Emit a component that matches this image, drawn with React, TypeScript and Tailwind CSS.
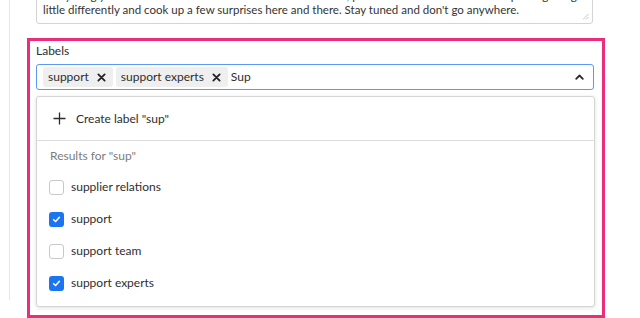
import React from "react";

const XIcon = () => (
  <svg width="9" height="9" viewBox="0 0 10 10" className="shrink-0">
    <path d="M1.5 1.5 L8.5 8.5 M8.5 1.5 L1.5 8.5" stroke="#222" strokeWidth="2" strokeLinecap="round" />
  </svg>
);

const Check = ({ checked }: { checked: boolean }) =>
  checked ? (
    <span className="w-[15px] h-[15px] rounded-[3px] bg-[#1b74f0] flex items-center justify-center shrink-0">
      <svg width="9" height="9" viewBox="0 0 10 10">
        <path d="M1.8 5.2 L4 7.3 L8.2 2.6" stroke="white" strokeWidth="1.7" fill="none" strokeLinecap="round" strokeLinejoin="round" />
      </svg>
    </span>
  ) : (
    <span className="w-[15px] h-[15px] rounded-[3px] border border-[#c9c9c9] bg-white shrink-0" />
  );

const items = [
  { label: "supplier relations", checked: false },
  { label: "support", checked: true },
  { label: "support team", checked: false },
  { label: "support experts", checked: true },
];

export default function App() {
  return (
    <div
      className="w-[640px] h-[318px] overflow-hidden bg-white text-[#2e2e2e]"
      style={{ fontFamily: "Lato, 'Noto Sans', sans-serif" }}
    >
      <div className="ml-[9px] h-full border-l border-[#e6e6e6] pl-[17px] pr-[35px]">
        {/* textarea */}
        <div className="relative ml-[9px] mr-[12px] -mt-[18px] border border-[#d4d4d4] rounded-[3px] pt-[6px] pb-[6px] pl-[6px] text-[11.5px] leading-[14px] text-[#333] whitespace-nowrap overflow-hidden">
          <div>everything you've come to learn and love about our summits, plus a lot more. We couldn't help doing thing a</div>
          <div>little differently and cook up a few surprises here and there. Stay tuned and don't go anywhere.</div>
          <svg width="7" height="7" viewBox="0 0 7 7" className="absolute right-[3px] bottom-[3px]">
            <path d="M6.5 1 L1 6.5 M6.5 4 L4 6.5" stroke="#b5b5b5" strokeWidth="0.8" />
          </svg>
        </div>

        {/* pink highlight */}
        <div className="mt-[14px] border-[3px] border-[#ec2d7b] pl-[6px] pr-[8px] pt-[3px] pb-[8px]">
          <div className="text-[12px] leading-[14px] text-[#2e2e2e]">Labels</div>
          <div className="mt-[6px] h-[26px] border border-[#5a9af5] rounded-[3px] flex items-center pl-[6px] pr-[9px]">
            <div className="flex items-center gap-[3px] flex-1">
              <span className="h-[20px] rounded-[3px] bg-[#efefef] flex items-center pl-[5px] pr-[7px] gap-[8px] text-[12px] text-[#2e2e2e]">
                support
                <XIcon />
              </span>
              <span className="h-[20px] rounded-[3px] bg-[#efefef] flex items-center pl-[5px] pr-[7px] gap-[8px] text-[12px] text-[#2e2e2e]">
                support experts
                <XIcon />
              </span>
              <span className="text-[12px] text-[#2e2e2e]">Sup</span>
            </div>
            <svg width="9" height="6" viewBox="0 0 9 6">
              <path d="M1.2 4.8 L4.5 1.5 L7.8 4.8" stroke="#2b2b2b" strokeWidth="1.8" fill="none" strokeLinecap="round" strokeLinejoin="round" />
            </svg>
          </div>

          {/* dropdown */}
          <div className="mt-[6px] mr-[-1px] border border-[#d5d5d5] rounded-[3px] bg-white shadow-[0_1px_4px_rgba(0,0,0,0.12)]">
            <div className="h-[44px] flex items-center pl-[16px] gap-[10px] border-b border-[#dcdcdc]">
              <svg width="13" height="13" viewBox="0 0 13 13">
                <path d="M6.5 0.5 V12.5 M0.5 6.5 H12.5" stroke="#2b2b2b" strokeWidth="1.3" />
              </svg>
              <span className="text-[12px] text-[#2e2e2e]">Create label "sup"</span>
            </div>
            <div className="pt-[8px] pb-[7px]">
              <div className="pl-[13px] text-[12px] leading-[14px] text-[#7c7c7c] mb-[8px]">Results for "sup"</div>
              {items.map((it) => (
                <div key={it.label} className="h-[32px] flex items-center pl-[12px] gap-[7px]">
                  <Check checked={it.checked} />
                  <span className="text-[12px] text-[#2e2e2e]">{it.label}</span>
                </div>
              ))}
            </div>
          </div>
        </div>
      </div>
    </div>
  );
}
